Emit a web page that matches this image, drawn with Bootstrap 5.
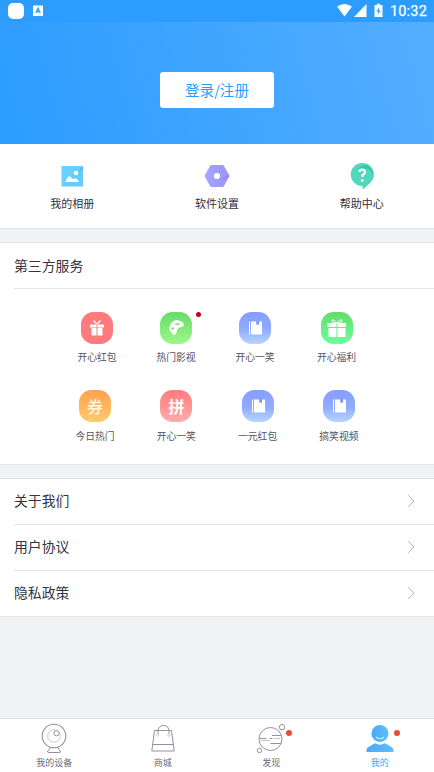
<!DOCTYPE html>
<html lang="zh-CN">
<head>
<meta charset="utf-8">
<meta name="viewport" content="width=device-width, initial-scale=1">
<title>我的</title>
<link href="https://cdn.jsdelivr.net/npm/bootstrap@5.3.0/dist/css/bootstrap.min.css" rel="stylesheet">
<style>
body{font-family:"Noto Sans CJK SC",sans-serif;color:#3a3a48;background:#f0f2f4;height:772px;overflow:hidden;line-height:1}
svg{display:block;flex:none}
.status{height:22px;background:#2c9dff;padding:0 7px 0 8px;color:#fff}
.clock{font:400 14.5px/22px Roboto,sans-serif;letter-spacing:.2px;padding-top:1px;-webkit-text-stroke:.25px #fff}
.hero{height:122px;background:linear-gradient(75deg,#2d9dff 5%,#52adff 95%);padding-top:50px}
.login{width:114px;height:36px;padding:0;background:#fff;color:#2c9dff;font-size:14.6px;line-height:36px;border-radius:3px;border:0}
.quick{height:85px;border-bottom:1px solid #e2e3e7}
.quick a{padding-top:17px;font-size:11px;color:#30303c}
.quick svg{margin-bottom:7px}
.panel{margin-top:13px;border-top:1px solid #e2e3e7;border-bottom:1px solid #e6e7e9}
.services{height:223px}
.line{height:46px;margin-left:14px;border-bottom:1px solid #e4e5e8;font-size:13.85px;color:#34343f;padding-right:19px;padding-bottom:2px}
h2.line{padding-bottom:1px}
.line:last-child{border-bottom:0;height:45px}
.apps{padding-left:67px;padding-top:23px}
.apps.second{padding-left:65px;padding-top:27px;gap:21.3px}
.app{width:60px;font-size:9.8px;color:#555564}
.app svg{margin-bottom:9px}
.second .app svg{margin-bottom:10px}
.dot{width:6px;height:6px;border-radius:50%;background:#e84b3c}
.app .dot{width:5px;height:5px;background:#c00018;left:50px;top:0}
.tabs{height:54px;border-top:1px solid #dfe1e5;font-size:9px;color:#6c6c7c}
.tabs a{padding-top:3px}
.tabs svg{margin-bottom:2px}
.tabs .dot{left:calc(50% + 14.5px);top:11px}
.tabs .current{color:#45a7f8}
</style>
<script src="https://cdn.jsdelivr.net/npm/bootstrap@5.3.0/dist/js/bootstrap.bundle.min.js"></script>
</head>
<body class="d-flex flex-column">
<svg width="0" height="0" class="position-absolute" aria-hidden="true">
<defs>
<linearGradient id="violet" x2="0" y2="1"><stop stop-color="#879cff"/><stop offset=".55" stop-color="#91acff"/><stop offset="1" stop-color="#b5d7ff"/></linearGradient>
<linearGradient id="lime" x2="0" y2="1"><stop stop-color="#67dd6c"/><stop offset="1" stop-color="#9cf787"/></linearGradient>
<linearGradient id="mint" x2="0" y2="1"><stop stop-color="#65dc68"/><stop offset="1" stop-color="#6aff9e"/></linearGradient>
<linearGradient id="amber" x2="0" y2="1"><stop stop-color="#ffa24c"/><stop offset="1" stop-color="#ffcb70"/></linearGradient>
<linearGradient id="rose" x2="0" y2="1"><stop stop-color="#ff7b7d"/><stop offset="1" stop-color="#ffacac"/></linearGradient>
<linearGradient id="sky"><stop stop-color="#48a8fc"/><stop offset="1" stop-color="#62bdff"/></linearGradient>
<linearGradient id="lilac"><stop stop-color="#a7a6ff"/><stop offset="1" stop-color="#9a94f3"/></linearGradient>
<symbol id="book" viewBox="0 0 32 32"><rect width="32" height="32" rx="12.500" fill="url(#violet)"/><path fill="#fff" d="M10 9.500h1v13h-1zM12 9.500h5.500v3.500l1.300-1 1.200 1V9.500h3v13H12z"/><path d="M17.500 9h2.500v4l-1.200-1-1.300 1z" fill="#7c94f5"/></symbol>
</defs>
</svg>
<header>
<div class="status d-flex align-items-center">
<svg width="40" height="22" viewBox="0 0 40 22"><rect y="3" width="16" height="16" rx="5" fill="#fff"/><rect x="25" y="5.500" width="10" height="10.500" rx=".5" fill="#fff"/><path d="M27.800 13l2.200-5 2.200 5M28.700 11.500h2.600" fill="none" stroke="#2c9dff" stroke-width="1.300"/><path d="M30.500 15h3" stroke="#a9d6ff" stroke-width=".7"/></svg>
<svg class="ms-auto me-1" width="49" height="22" viewBox="0 0 49 22"><path d="M0 6.500Q7.500 1.500 15 6.500L7.500 16.500zM29.500 4v13H17zM37.500 5h2.500V3.700h3V5h2.500v12h-8z" fill="#fff"/><path d="M42.500 7l-3.200 4.500h2L40.500 15l3.300-4.500h-2z" fill="#2c9dff"/></svg>
<span class="clock">10:32</span>
</div>
<div class="hero text-center"><button class="btn login">登录/注册</button></div>
</header>
<nav class="quick row g-0 bg-white text-center">
<a class="col text-decoration-none d-flex flex-column align-items-center"><svg width="28" height="30" viewBox="0 0 28 30"><path fill="#6bcfff" d="M3.500 5h21.500v20.500H3.500z"/><path fill="#51bdf0" d="M25 5v3q-3 5-8 5-4 0-5 3l-8 9h21z" opacity=".22"/><path d="M25 5v2.500q-2 3-5 4z" fill="#49b9eb"/><circle cx="18" cy="12" r="2.200" fill="#fff"/><path fill="#fff" d="M7.500 21l1-3 3-3.300 3.500 3.500 2-1.200 3 2 1 2z"/></svg><span>我的相册</span></a>
<a class="col text-decoration-none d-flex flex-column align-items-center"><svg width="28" height="30" viewBox="0 0 28 30"><path d="M8.500 4h11q1 0 1.500 1l5.500 10-5.500 10q-.5 1-1.500 1h-11q-1 0-1.500-1l-5.500-10 5.500-10q.5-1 1.500-1z" fill="url(#lilac)"/><path d="M14 18q7 1 11.500-5l1 2q-6 6-12.500 3z" fill="#8c83ed" opacity=".6"/><circle cx="14" cy="15" r="3.100" fill="#fff"/></svg><span>软件设置</span></a>
<a class="col text-decoration-none d-flex flex-column align-items-center"><svg width="28" height="30" viewBox="0 0 28 30"><path d="M14 2a11.500 11.500 0 0 1 8 20q-4 4-7.200 6.500L14.500 25A11.500 11.500 0 0 1 14 2z" fill="#50d8bb"/><path d="M10 8q5-6 11-3 4.500 3 4.500 9-4-8-15.500-6z" fill="#38c9aa"/><path d="M11.300 11q.3-2.300 2.900-2.300 2.700 0 2.700 2.300 0 1.500-1.400 2.300-1.200.7-1.200 2.700" fill="none" stroke="#fff" stroke-width="2.200"/><circle cx="14.200" cy="19.500" r="1.400" fill="#fff"/></svg><span>帮助中心</span></a>
</nav>
<section class="panel services bg-white">
<h2 class="line d-flex align-items-center mb-0 fw-normal">第三方服务</h2>
<div class="apps d-flex">
<div class="app d-flex flex-column align-items-center"><svg width="32" height="32" viewBox="0 0 32 32"><rect width="32" height="32" rx="12.500" fill="#ff7b7d"/><path fill="#fff" d="M9 12.500h6.500v3H9zM16.500 12.500H23v3h-6.500zM10.500 16h5v7.500h-5zM16.500 16h5v7.500h-5z"/><path d="M16 12l-3.500-3.500M16 12l3.500-3.500" stroke="#fff" stroke-width="1.200"/></svg>开心红包</div>
<div class="app position-relative d-flex flex-column align-items-center" style="margin-left:19px"><svg width="32" height="32" viewBox="0 0 32 32"><rect width="32" height="32" rx="12.500" fill="url(#lime)"/><path fill="#fff" d="M12 10q2-2 5-2 3.500.5 6 2.500 1.500 2 .5 3.700-1.500 1-4 1.300-2 .5-2.500 3-1 4.500-2.500 4.500-2.500-.5-4-3.500-2-1.500-1.300-3 .3-3.500 2.800-6.500z"/><path d="M15.500 11h3.500v2.300h-3.500zM11.500 15.500h2.500v2h-2.500z" fill="#77df71"/><path d="M16.300 12.200h2" stroke="#fff" stroke-width=".7"/></svg>热门影视<span class="dot position-absolute"></span></div>
<div class="app d-flex flex-column align-items-center" style="margin-left:19px"><svg width="32" height="32"><use href="#book"/></svg>开心一笑</div>
<div class="app d-flex flex-column align-items-center" style="margin-left:21.5px"><svg width="32" height="32" viewBox="0 0 32 32"><rect width="32" height="32" rx="12.500" fill="url(#mint)"/><path fill="#fff" d="M6.500 11h9v4h-9zM16.500 11H25v4h-8.500zM7.500 16h8v9h-8zM16.500 16h8v9h-8z"/><path d="M16 11q-6-.3-5-2.500 1.500-2 5 2.500zM16 11q6-.3 5-2.500-1.500-2-5 2.500z" fill="none" stroke="#fff"/></svg>开心福利</div>
</div>
<div class="apps second d-flex">
<div class="app d-flex flex-column align-items-center"><svg width="32" height="32" viewBox="0 0 32 32"><rect width="32" height="32" rx="12.500" fill="url(#amber)"/><text x="16" y="22.500" font-size="16" font-weight="500" fill="#fff7df" text-anchor="middle">券</text></svg>今日热门</div>
<div class="app d-flex flex-column align-items-center"><svg width="32" height="32" viewBox="0 0 32 32"><rect width="32" height="32" rx="12.500" fill="url(#rose)"/><text x="16.500" y="22.500" font-size="16" font-weight="700" fill="#fff" text-anchor="middle">拼</text></svg>开心一笑</div>
<div class="app d-flex flex-column align-items-center"><svg width="32" height="32"><use href="#book"/></svg>一元红包</div>
<div class="app d-flex flex-column align-items-center"><svg width="32" height="32"><use href="#book"/></svg>搞笑视频</div>
</div>
</section>
<section class="panel bg-white">
<div class="line d-flex align-items-center justify-content-between">关于我们<svg width="8" height="14" viewBox="0 0 8 14"><path d="M1 1l6 6-6 6" fill="none" stroke="#b9b9be"/></svg></div>
<div class="line d-flex align-items-center justify-content-between">用户协议<svg width="8" height="14" viewBox="0 0 8 14"><path d="M1 1l6 6-6 6" fill="none" stroke="#b9b9be"/></svg></div>
<div class="line d-flex align-items-center justify-content-between">隐私政策<svg width="8" height="14" viewBox="0 0 8 14"><path d="M1 1l6 6-6 6" fill="none" stroke="#b9b9be"/></svg></div>
</section>
<nav class="tabs row g-0 bg-white mt-auto">
<a class="col text-decoration-none text-reset d-flex flex-column align-items-center"><svg width="32" height="34" viewBox="0 0 32 34" fill="none" stroke="#92929f"><circle cx="16" cy="14" r="11.800" stroke-width="1.100"/><circle cx="16" cy="14" r="6.300" stroke="#c9c9d2"/><circle cx="18.500" cy="11.300" r="2.600" fill="#fff"/><path d="M12 25.500q-.5 2.500-2 3-1.500 2 1 2h10q2.500 0 1-2-1.500-.5-2-3"/></svg>我的设备</a>
<a class="col text-decoration-none text-reset d-flex flex-column align-items-center"><svg width="32" height="34" viewBox="0 0 32 34" fill="none" stroke="#92929f"><path d="M7.500 8.500h17l2.700 20.500H4.800zM5.500 22.500h21M11 12V8q1-4.500 5.500-4.500T22 8v4"/><g stroke="#d0d0d8"><circle cx="10.500" cy="13" r="1.300"/><circle cx="22" cy="13" r="1.300"/></g></svg>商城</a>
<a class="col position-relative text-decoration-none text-reset d-flex flex-column align-items-center"><svg width="32" height="34" viewBox="0 0 32 34" fill="none" stroke="#92929f"><circle cx="15.500" cy="17" r="11.500"/><circle cx="27" cy="5.200" r="2.700"/><circle cx="4.500" cy="28.500" r="2.200"/><path d="M4.500 16.500h7M14.500 16.500h3M17 13.500h9M15.500 21.500h10.500"/><path stroke="#c3c3cc" d="M6 18.500h9M19 16.500h6"/></svg>发现<span class="dot position-absolute"></span></a>
<a class="col position-relative text-decoration-none current d-flex flex-column align-items-center"><svg width="32" height="34" viewBox="0 0 32 34"><circle cx="16" cy="11.500" r="8.500" fill="url(#sky)"/><path d="M12 15q4 3.500 8 0" fill="none" stroke="#c8ecff" stroke-width="1.200"/><path d="M2.500 30v-2q0-2 2-3l6-3.500q1-.5 2 .3 3.500 2 7 0 1-.8 2-.3l6 3.500q2 1 2 3v2z" fill="url(#sky)"/></svg>我的<span class="dot position-absolute"></span></a>
</nav>
</body>
</html>
